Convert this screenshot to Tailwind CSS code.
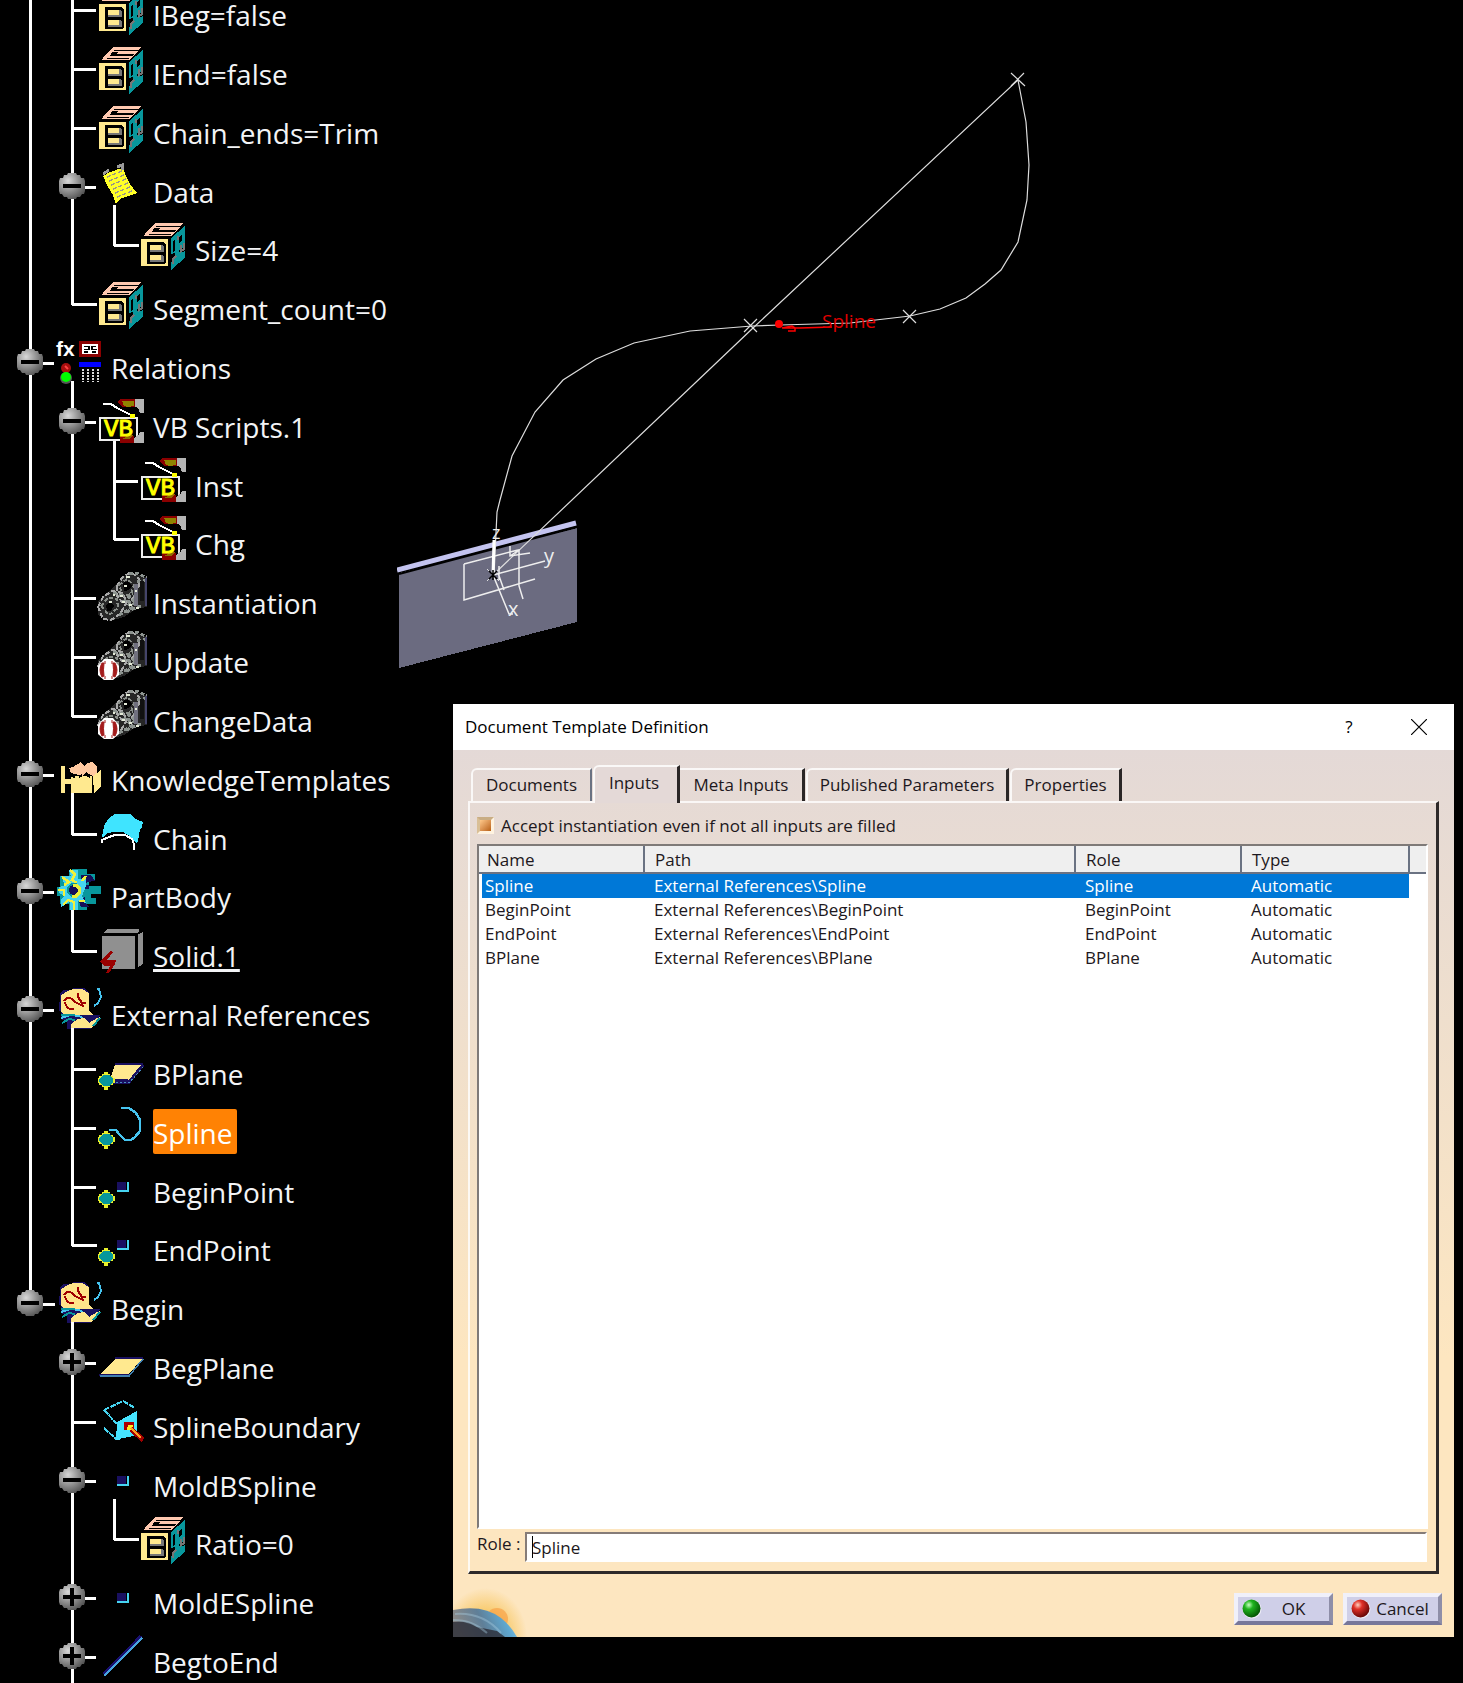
<!DOCTYPE html>
<html lang="en">
<head>
<meta charset="utf-8">
<meta name="viewport" content="width=device-width, initial-scale=1">
<title>Document Template Definition</title>
<script src="https://cdn.jsdelivr.net/npm/@tailwindcss/browser@4"></script>
</head>
<body class="bg-black font-['Open_Sans',sans-serif]">

<svg class="absolute size-0" aria-hidden="true">
  <defs>
    <radialGradient id="steel" cx="0.35" cy="0.3" r="0.75"><stop offset="0" stop-color="#d8d8d8"/><stop offset="0.5" stop-color="#959595"/><stop offset="1" stop-color="#555"/></radialGradient>
    <radialGradient id="green" cx="0.35" cy="0.3" r="0.7"><stop offset="0" stop-color="#c8ffc0"/><stop offset="0.35" stop-color="#1fb41f"/><stop offset="1" stop-color="#045804"/></radialGradient>
    <radialGradient id="red" cx="0.35" cy="0.3" r="0.7"><stop offset="0" stop-color="#ffd0c0"/><stop offset="0.35" stop-color="#e03028"/><stop offset="1" stop-color="#6a0808"/></radialGradient>
    <radialGradient id="glow"><stop offset="0.4" stop-color="#f7c55c"/><stop offset="1" stop-color="#f7c55c" stop-opacity="0"/></radialGradient>
    <linearGradient id="planet" x1="0" y1="0.3" x2="1" y2="0.1"><stop offset="0" stop-color="#8c8a88"/><stop offset="0.4" stop-color="#5f7f98"/><stop offset="0.75" stop-color="#5fa8d0"/><stop offset="1" stop-color="#8fd0f0"/></linearGradient>

  <!-- connectors, one 42px tree column each -->
  <g id="v" fill="#fff"><rect x="19.500" y="0" width="3" height="60" shape-rendering="crispEdges"/></g>
  <g id="t" fill="#fff" shape-rendering="crispEdges"><rect x="19.500" y="0" width="3" height="60"/><rect x="21" y="28" width="24" height="3"/></g>
  <g id="l" fill="#fff" shape-rendering="crispEdges"><rect x="19.500" y="0" width="3" height="30"/><rect x="20.500" y="28" width="25" height="3"/></g>
  <g id="child"><rect x="19.500" y="47" width="3" height="13" fill="#fff" shape-rendering="crispEdges"/></g>
  <g id="minus"><rect x="21" y="28" width="24" height="3" fill="#fff"/><path d="M17 15h8l1 2h3l1 3h3l1 3v10l-1 3h-2l-2 3h-3l-1 2h-8l-1-2h-3l-2-3H9l-1-3V23l1-3h3l1-3h3z" fill="url(#steel)"/><rect x="12" y="26" width="18" height="4"/></g>
  <g id="plus"><rect x="21" y="28" width="24" height="3" fill="#fff"/><path d="M17 15h8l1 2h3l1 3h3l1 3v10l-1 3h-2l-2 3h-3l-1 2h-8l-1-2h-3l-2-3H9l-1-3V23l1-3h3l1-3h3z" fill="url(#steel)"/><path d="M12 26h7v-7h4v7h7v4h-7v7h-4v-7h-7z"/></g>

  <!-- lettered toy block -->
  <g id="box" shape-rendering="crispEdges">
    <path d="M20 7h28l-2 3-9 10H9l3-5z" fill="#ffc9b0"/><path d="M21 10h25M14 18h22" stroke="#000" fill="none"/><path d="M19 12h6l-2 2h18l-2 2H17z"/>
    <path d="M50 10v31l-6 6-8 7V22l7-6z" fill="#08979c"/><path d="M38 25l2-2v11l-2 2zM44 21l3-3v6l-3 3zM36 38l4-1v3l-2 4-2 2zM43 35l7-4v4l-5 2z"/><path d="M43 20v4M46 29v6l3-2v-6M38 48v-5l3-3" stroke="#777" stroke-width="2" fill="none"/>
    <rect x="6" y="23" width="27" height="27" fill="#ffe98f"/><path d="M9 26h19l3 3v7l-1 1 1 1v8l-2 2H9v-2h3V28H9z"/><path d="M9 26h3v22H9z" fill="#ffe98f"/>
    <path d="M15 29h12l2 2v5H15zM15 39h12l2 2v5H15z" fill="#777"/><path d="M15 29h11v5H15zM15 39h11v5H15z" fill="#ffe98f"/>
  </g>
  <g id="sheet" shape-rendering="crispEdges"><path d="M10 18l7-4 6-2 7-3 3 9 4 8 7 9-9 3-8 3-4 5-3-9-5-8z" fill="#ffff28"/><path d="M10 16l6-4M24 9l5-2v5" stroke="#999" stroke-width="3"/><path d="M14 19l15-6M16 23l15-6M18 27l15-6M20 31l15-6M22 35l15-6M24 39l15-6" stroke="#99958a" stroke-width="1.500" stroke-dasharray="4 2"/></g>
  <g id="relations">
    <text x="5" y="22" font-family="Liberation Sans" font-size="21" font-weight="700" fill="#fff">fx</text>
    <g shape-rendering="crispEdges"><path d="M28 7h22v16H28z" fill="#8b0000"/><path d="M31 10h16v10H31z" fill="#fff"/><path d="M33 12.500h5v3h-5M45 12.500h-4v3h5M33 18h4M41 18h4" stroke="#000" stroke-width="1.500" fill="none"/>
    <path d="M28 28h22v5H28z" fill="#00f"/><path d="M32 35v13M37 35v13M42 35v13M47 35v13" stroke="#ddd" stroke-width="2" stroke-dasharray="2 1"/></g>
    <circle cx="15" cy="44" r="6" fill="#555"/><circle cx="15" cy="34" r="5" fill="#a80f0f"/><path d="M14 32l3 3" stroke="#f44" stroke-width="2"/><circle cx="15" cy="43" r="5" fill="#0f0"/>
  </g>
  <g id="vb">
    <g shape-rendering="crispEdges"><path d="M7 25h37v22H7z" fill="#000" stroke="#eee" stroke-width="2"/><path d="M24 9l4-3h14v8H30z" fill="#8b0000"/><path d="M29 8h12v5l-6 1-4-1z" fill="#8f8400"/><path d="M42 6h9v14h-4l-2-5-3-1z" fill="#b5b5b5"/><path d="M10 11h8l6 4 6 3 8 4" stroke="#fff" stroke-width="2" fill="none"/><path d="M27 43h14v7H27z" fill="#8b0000"/><path d="M29 46h8l3-4h-4z" fill="#8f6a00"/><path d="M41 45l3-3h2l1-3h4v11H41z" fill="#b5b5b5"/></g>
    <text x="11" y="43" font-family="Liberation Mono" font-size="24" fill="#ff0" stroke="#ff0">VB</text>
    <path d="M37 21h5v4h-5z" fill="#ff0"/>
  </g>
  <g id="gears" shape-rendering="crispEdges" fill="none">
    <path d="M24 15l7-8 8-3 15 5v29l-11 2-12 8-14 4-12-6V32l10-9z" fill="#262626"/>
    <path d="M24 17l5-8 7-5 7 2 4 6-3 11-6 9-8 2-6-7zM5 38l5-10 9-6 10 2 5 9-7 12-9 6-8-1z" stroke="#aaa" stroke-width="2" stroke-dasharray="5 2"/>
    <path d="M26 16l8-6 7 6-3 9-8 2zM8 37l7-8 9 1 1 9-9 7z" stroke="#8a8f8a" stroke-width="2" stroke-dasharray="4 2"/>
    <path d="M30 14l5-2 4 5-3 4-5 1zM13 36l5-3 3 4-3 5-4 0z" fill="#000"/>
    <path d="M36 4h8l10 5M44 13l8-2M34 32l14 6M26 46l14-8M33 43l12-5M20 24l10 3M30 33l10-8M35 37l8-8" stroke="#8d9490" stroke-width="3" stroke-dasharray="4 2"/>
    <path d="M42 17v20M46 14v24" stroke="#8080909" stroke-width="3"/><path d="M43 15v22" stroke="#70707e" stroke-width="4"/><path d="M53 9v28" stroke="#44446a" stroke-width="2"/><path d="M49 12v20" stroke="#111" stroke-width="4"/>
    <path d="M33 8h4M42 22h2M27 27h3M36 36h3M20 26h2M43 39h3M29 33h3M31 17h3M16 33h3" stroke="#e4ead8" stroke-width="2"/>
  </g>
  <g id="ball"><path d="M11 31h9l6 7v9l-6 5h-9l-6-5v-9z" fill="#fff"/><path d="M9 35q-4 7 0 14l2-1q-1-6 0-13zM22 35q4 7 0 14l-2-1q1-6 0-13z" fill="#a31b1b" stroke="#a31b1b"/><path d="M12 33v18M19 33v18" stroke="#a31b1b" stroke-dasharray="3 12"/></g>
  <g id="castle" shape-rendering="crispEdges"><path d="M10 20h4v13h6v-3h21v17H20v-9h-6v9h-4z" fill="#ffe98f"/><path d="M42 30l8-6v17l-7 6z" fill="#ffe98f"/><path d="M18 22l4-1 5-3 3-2 3 4 4-3 4-1 5 5v5l-4 4-4-2-3-2-4 4-4-1-3-1-4-1z" fill="#ffc9a0"/><path d="M20 30l4 1M28 31l3-2M36 29l3 2" stroke="#000" stroke-width="2"/></g>
  <g id="chainicon" shape-rendering="crispEdges"><path d="M9 32l2-11 4-7 7-5h15l6 5 7 3-1 5-2 2-2 12-2 2-5-6-8-5-8 0-8 1-4 4z" fill="#3fe4ff"/><path d="M9 38v-3l7-3 6-2h10l7 4 2 5v6" fill="none" stroke="#fff" stroke-width="2"/></g>
  <g id="cog" shape-rendering="crispEdges"><path d="M21 6h15v5h8v7h-6v5h12v8H40v4h5v6h-9v6H18v-6h-9v-8H6v-9h3V13h9V9h3z" fill="#08979c"/><path d="M30 12h10l4 6-8 1-4 7M28 38l6-4v5l4 5h-8M30 22h8v4h-8z" fill="#160f5a"/><path d="M18 7h9v9h8v7l-4 10 4 7-8-2v9h-8v-8l-9 5v-8l4-3-6-3v-6l6-2-4-9h10z" fill="#46d4f0"/><path d="M19 7l5 4-3 6 5 3M11 14l7 5-5 3M7 27h6v6M12 42l5-5 6 2v8M28 38h6M31 18l4-5" stroke="#f2f23a" stroke-width="2.500" fill="none"/><circle cx="23" cy="27" r="6" fill="#160f5a" stroke="#08979c" stroke-width="2"/><path d="M22 22h3l3 3v5l-3 3h-4" fill="none" stroke="#e9f03a" stroke-width="3"/></g>
  <g id="solid" shape-rendering="crispEdges" fill="#909090"><path d="M9 14h33v33H9zM14 7h32v2l-2 2H11v-1z"/><path d="M45 12l3-1 2-2v32l-3 3-2 1z"/><path d="M17 29l3 1-6 8h9l-1 4-6 9h-3l4-7h-5l-5-4z" fill="#9a0000"/></g>
  <g id="extref" shape-rendering="crispEdges"><path d="M9 12l4-3h7l3-2h10l5 4v18l3 5 8 0-3 6-6 8H16l0-7-6-3v-8H8z" fill="#191060"/><path d="M10 14l7-4 5-2h9l7 4v18l4 4H14l-4-3z" fill="#ffe58a"/><path d="M27 12v4l4 6h4M13 20q4-6 9-1 4 4 11 6M14 21q1 8 9 7" fill="none" stroke="#a00000" stroke-width="2"/><path d="M10 37l9-3 9 1 8 5" fill="none" stroke="#46c4f0" stroke-width="2"/><path d="M11 42l7-4 6 1M10 34h14" fill="none" stroke="#08979c" stroke-width="2"/><path d="M20 43l7-5 6-1 5 5 8-5 3-1-4 7-5 4H20z" fill="#ffe58a"/><path d="M42 45l7-8" stroke="#08979c" stroke-width="2"/><path d="M46 8h2l2 8-3 6-4 3" fill="none" stroke="#46c4f0" stroke-width="2"/></g>
  <g id="diamond" shape-rendering="crispEdges"><path d="M11 32h4v2h2v2h3v2h2v5h-2v2h-3v2h-2v3h-4v-3H9v-2H6v-2H5v-5h1v-2h3v-2h2z" fill="#e8f02a"/><path d="M10 35h6l4 4v3l-4 4h-6l-4-4v-3z" fill="#08979c"/></g>
  <g id="planeS" shape-rendering="crispEdges"><path d="M22 25h27L36 42H16z" fill="#ffe98f"/><path d="M22 24h28M17 40h18" stroke="#191060" stroke-width="2"/><path d="M50 25L36 42H20" fill="none" stroke="#191060" stroke-width="3"/><path d="M50 27L37 42H22" fill="none" stroke="#4a8fc0" stroke-width="1" stroke-dasharray="2 2"/></g>
  <g id="planeL" shape-rendering="crispEdges"><path d="M22 25h27L36 40H8z" fill="#ffe98f"/><path d="M22 24h28M6 41h30" stroke="#191060" stroke-width="2"/><path d="M50 25L36 42H7" fill="none" stroke="#3f7fb0" stroke-width="1.500"/></g>
  <g id="curve" fill="none" stroke="#46c4f0" stroke-width="2.500" shape-rendering="crispEdges"><path d="M28 9h8l7 5 4 7v11l-5 6-4 3h-6l-6-6-3-4h-7"/></g>
  <g id="point" shape-rendering="crispEdges"><path d="M24 24h9v9h-9z" fill="#191060"/><path d="M24 33h11v-9" fill="none" stroke="#46d4f0" stroke-width="2"/></g>
  <g id="boundary" shape-rendering="crispEdges"><path d="M24 29l20-11v24l-8 2-7 1-3 2h-3z" fill="#46e4ff"/><path d="M11 17l19-9 12 7M11 17l13 14M11 35l12 11" fill="none" stroke="#46d4f0" stroke-width="2" stroke-dasharray="6 1"/><path d="M31 29h10v8H31z" fill="#b00000"/><path d="M35 32h5v5h-6z" fill="#fff020"/><path d="M38 36l12 11" stroke="#a00000" stroke-width="5"/><path d="M38 35l10 10" stroke="#ffa020" stroke-width="2"/></g>
  <g id="segment" shape-rendering="crispEdges"><path d="M11 46L48 8" stroke="#191070" stroke-width="3"/><path d="M11 48L49 10" stroke="#46a4e0" stroke-width="1.500"/></g>
  </defs>
</svg>

<div class="flex h-screen overflow-hidden">
  <nav class="w-[397px] shrink-0 pl-[9px] text-[28px] whitespace-nowrap text-gray-100" aria-label="Specification tree">
    <ul class="-mt-[19px]">
      <li class="flex h-[59px]"><svg class="h-[59px] w-36 shrink-0"><use href="#v"/><use href="#t" x="42"/><use href="#box" x="84"/></svg><span class="mt-2.5 h-[45px] leading-[49px]">IBeg=false</span></li>
      <li class="flex h-[59px]"><svg class="h-[59px] w-36 shrink-0"><use href="#v"/><use href="#t" x="42"/><use href="#box" x="84"/></svg><span class="mt-2.5 h-[45px] leading-[49px]">IEnd=false</span></li>
      <li class="flex h-[59px]"><svg class="h-[59px] w-36 shrink-0"><use href="#v"/><use href="#t" x="42"/><use href="#box" x="84"/></svg><span class="mt-2.5 h-[45px] leading-[49px]">Chain_ends=Trim</span></li>
      <li class="flex h-[58px]"><svg class="h-[59px] w-[42px] shrink-0"><use href="#v"/></svg><button class="h-[59px] w-[42px] shrink-0" aria-label="Collapse Data"><svg class="h-[59px] w-[42px] overflow-visible"><use href="#v"/><use href="#minus"/></svg></button><svg class="h-[59px] w-15 shrink-0"><use href="#child"/><use href="#sheet"/></svg><span class="mt-2.5 h-[45px] leading-[49px]">Data</span></li>
      <li class="flex h-[59px]"><svg class="h-[59px] w-[186px] shrink-0"><use href="#v"/><use href="#v" x="42"/><use href="#l" x="84"/><use href="#box" x="126"/></svg><span class="mt-2.5 h-[45px] leading-[49px]">Size=4</span></li>
      <li class="flex h-[59px]"><svg class="h-[59px] w-36 shrink-0"><use href="#v"/><use href="#l" x="42"/><use href="#box" x="84"/></svg><span class="mt-2.5 h-[45px] leading-[49px]">Segment_count=0</span></li>
      <li class="flex h-[59px]"><button class="h-[59px] w-[42px] shrink-0" aria-label="Collapse Relations"><svg class="h-[59px] w-[42px] overflow-visible"><use href="#v"/><use href="#minus"/></svg></button><svg class="h-[59px] w-15 shrink-0"><use href="#child"/><use href="#relations"/></svg><span class="mt-2.5 h-[45px] leading-[49px]">Relations</span></li>
      <li class="flex h-[59px]"><svg class="h-[59px] w-[42px] shrink-0"><use href="#v"/></svg><button class="h-[59px] w-[42px] shrink-0" aria-label="Collapse VB Scripts.1"><svg class="h-[59px] w-[42px] overflow-visible"><use href="#v"/><use href="#minus"/></svg></button><svg class="h-[59px] w-15 shrink-0"><use href="#child"/><use href="#vb"/></svg><span class="mt-2.5 h-[45px] leading-[49px]">VB Scripts.1</span></li>
      <li class="flex h-[58px]"><svg class="h-[59px] w-[186px] shrink-0"><use href="#v"/><use href="#v" x="42"/><use href="#t" x="84"/><use href="#vb" x="126"/></svg><span class="mt-2.5 h-[45px] leading-[49px]">Inst</span></li>
      <li class="flex h-[59px]"><svg class="h-[59px] w-[186px] shrink-0"><use href="#v"/><use href="#v" x="42"/><use href="#l" x="84"/><use href="#vb" x="126"/></svg><span class="mt-2.5 h-[45px] leading-[49px]">Chg</span></li>
      <li class="flex h-[59px]"><svg class="h-[59px] w-36 shrink-0"><use href="#v"/><use href="#t" x="42"/><use href="#gears" x="84"/></svg><span class="mt-2.5 h-[45px] leading-[49px]">Instantiation</span></li>
      <li class="flex h-[59px]"><svg class="h-[59px] w-36 shrink-0"><use href="#v"/><use href="#t" x="42"/><use href="#gears" x="84"/><use href="#ball" x="84"/></svg><span class="mt-2.5 h-[45px] leading-[49px]">Update</span></li>
      <li class="flex h-[59px]"><svg class="h-[59px] w-36 shrink-0"><use href="#v"/><use href="#l" x="42"/><use href="#gears" x="84"/><use href="#ball" x="84"/></svg><span class="mt-2.5 h-[45px] leading-[49px]">ChangeData</span></li>
      <li class="flex h-[59px]"><button class="h-[59px] w-[42px] shrink-0" aria-label="Collapse KnowledgeTemplates"><svg class="h-[59px] w-[42px] overflow-visible"><use href="#v"/><use href="#minus"/></svg></button><svg class="h-[59px] w-15 shrink-0"><use href="#castle"/><use href="#child"/></svg><span class="mt-2.5 h-[45px] leading-[49px]">KnowledgeTemplates</span></li>
      <li class="flex h-[58px]"><svg class="h-[59px] w-36 shrink-0"><use href="#v"/><use href="#l" x="42"/><use href="#chainicon" x="84"/></svg><span class="mt-2.5 h-[45px] leading-[49px]">Chain</span></li>
      <li class="flex h-[59px]"><button class="h-[59px] w-[42px] shrink-0" aria-label="Collapse PartBody"><svg class="h-[59px] w-[42px] overflow-visible"><use href="#v"/><use href="#minus"/></svg></button><svg class="h-[59px] w-15 shrink-0"><use href="#cog"/><use href="#child"/></svg><span class="mt-2.5 h-[45px] leading-[49px]">PartBody</span></li>
      <li class="flex h-[59px]"><svg class="h-[59px] w-36 shrink-0"><use href="#v"/><use href="#l" x="42"/><use href="#solid" x="84"/></svg><span class="mt-2.5 h-[45px] leading-[49px] underline decoration-[3px] underline-offset-[2px]">Solid.1</span></li>
      <li class="flex h-[59px]"><button class="h-[59px] w-[42px] shrink-0" aria-label="Collapse External References"><svg class="h-[59px] w-[42px] overflow-visible"><use href="#v"/><use href="#minus"/></svg></button><svg class="h-[59px] w-15 shrink-0"><use href="#extref"/><use href="#child"/></svg><span class="mt-2.5 h-[45px] leading-[49px]">External References</span></li>
      <li class="flex h-[59px]"><svg class="h-[59px] w-36 shrink-0"><use href="#v"/><use href="#t" x="42"/><use href="#planeS" x="84"/><use href="#diamond" x="84"/></svg><span class="mt-2.5 h-[45px] leading-[49px]">BPlane</span></li>
      <li class="flex h-[59px]"><svg class="h-[59px] w-36 shrink-0"><use href="#v"/><use href="#t" x="42"/><use href="#curve" x="84"/><use href="#diamond" x="84"/></svg><span class="mt-2.5 h-[45px] rounded-xs bg-[#ff8204] pr-1 leading-[49px] text-white">Spline</span></li>
      <li class="flex h-[58px]"><svg class="h-[59px] w-36 shrink-0"><use href="#v"/><use href="#t" x="42"/><use href="#point" x="84"/><use href="#diamond" x="84"/></svg><span class="mt-2.5 h-[45px] leading-[49px]">BeginPoint</span></li>
      <li class="flex h-[59px]"><svg class="h-[59px] w-36 shrink-0"><use href="#v"/><use href="#l" x="42"/><use href="#point" x="84"/><use href="#diamond" x="84"/></svg><span class="mt-2.5 h-[45px] leading-[49px]">EndPoint</span></li>
      <li class="flex h-[59px]"><button class="h-[59px] w-[42px] shrink-0" aria-label="Collapse Begin"><svg class="h-[59px] w-[42px] overflow-visible"><use href="#l"/><use href="#minus"/></svg></button><svg class="h-[59px] w-15 shrink-0"><use href="#extref"/><use href="#child"/></svg><span class="mt-2.5 h-[45px] leading-[49px]">Begin</span></li>
      <li class="flex h-[59px]"><button class="ml-[42px] h-[59px] w-[42px] shrink-0" aria-label="Expand BegPlane"><svg class="h-[59px] w-[42px] overflow-visible"><use href="#v"/><use href="#plus"/></svg></button><svg class="h-[59px] w-15 shrink-0"><use href="#planeL"/></svg><span class="mt-2.5 h-[45px] leading-[49px]">BegPlane</span></li>
      <li class="flex h-[59px]"><svg class="h-[59px] w-36 shrink-0"><use href="#t" x="42"/><use href="#boundary" x="84"/></svg><span class="mt-2.5 h-[45px] leading-[49px]">SplineBoundary</span></li>
      <li class="flex h-[58px]"><button class="ml-[42px] h-[59px] w-[42px] shrink-0" aria-label="Collapse MoldBSpline"><svg class="h-[59px] w-[42px] overflow-visible"><use href="#v"/><use href="#minus"/></svg></button><svg class="h-[59px] w-15 shrink-0"><use href="#child"/><use href="#point"/></svg><span class="mt-2.5 h-[45px] leading-[49px]">MoldBSpline</span></li>
      <li class="flex h-[59px]"><svg class="h-[59px] w-[186px] shrink-0"><use href="#v" x="42"/><use href="#l" x="84"/><use href="#box" x="126"/></svg><span class="mt-2.5 h-[45px] leading-[49px]">Ratio=0</span></li>
      <li class="flex h-[59px]"><button class="ml-[42px] h-[59px] w-[42px] shrink-0" aria-label="Expand MoldESpline"><svg class="h-[59px] w-[42px] overflow-visible"><use href="#v"/><use href="#plus"/></svg></button><svg class="h-[59px] w-15 shrink-0"><use href="#point"/></svg><span class="mt-2.5 h-[45px] leading-[49px]">MoldESpline</span></li>
      <li class="flex h-[59px]"><button class="ml-[42px] h-[59px] w-[42px] shrink-0" aria-label="Expand BegtoEnd"><svg class="h-[59px] w-[42px] overflow-visible"><use href="#v"/><use href="#plus"/></svg></button><svg class="h-[59px] w-15 shrink-0"><use href="#segment"/></svg><span class="mt-2.5 h-[45px] leading-[49px]">BegtoEnd</span></li>
    </ul>
  </nav>

  <main class="flex min-w-0 flex-1 flex-col">
    <svg class="h-[704px] w-full shrink-0" viewBox="397 0 1066 704" preserveAspectRatio="xMinYMin meet" fill="none" stroke="#ddd" role="img" aria-label="3D view of the spline">
      <path d="M399 573L577 528V622L399 668z" fill="#6b6b80" stroke="none" shape-rendering="crispEdges"/>
      <path d="M397 570L576 523" stroke="#c3c3ef" stroke-width="5"/>
      <path d="M399 574L577 527" stroke="#000" stroke-width="2"/>
      <g stroke-width="1.200">
        <path d="M493 575L753 328L1018 80"/>
        <path d="M1018 80L1026 122L1029 165L1027 200L1018 242L1001 270L985 284L966 298L940 309L910 316L850 323L780 325L752 326L690 331L634 343L596 359L563 380L535 412L512 456L500 500L497 512L494 575"/>
        <path d="M1011 73l14 13M1024 73l-13 13M903 310l13 13M916 310l-13 13M744 319l13 13M757 319l-13 13"/>
      </g>
      <path d="M464 564V600L535 579M464 564L518 550M519 549V586L523 599M510 546V556L530 553M510 556L519 550M493 575L545 561M493 575L509 614L513 614M498 573L504 590M499 566V580" stroke="#eee" stroke-width="1.500"/>
      <path d="M494 540L493 575" stroke="#fff" stroke-width="3"/>
      <path d="M487 569l12 12M499 569l-12 12"/><path d="M489 571l8 8M497 571l-8 8M493 570v10" stroke="#000" stroke-width="1.500"/>
      <g fill="#eee" stroke="none" font-family="Open Sans" font-size="20"><text x="544" y="563">y</text><text x="508" y="616">x</text><text x="492" y="539" font-size="18">z</text></g>
      <g stroke="#f00" stroke-width="1.500"><circle cx="779" cy="324" r="4" fill="#f00" stroke="none"/><path d="M782 328l10-2 3 2v3h-7M783 328h17l32-1"/></g>
      <text x="822" y="328" fill="#e00000" stroke="none" font-family="Open Sans" font-size="19">Spline</text>
    </svg>

    <section class="mr-[9px] mb-[46px] ml-14 flex min-h-0 flex-1 flex-col bg-linear-to-b from-[#e2d8d8] to-[#fde6c0] to-70% text-[17px] text-[#1d1820]" role="dialog" aria-labelledby="dlg-title">
      <header class="flex h-[46px] shrink-0 items-center bg-white pl-3 text-black">
        <h1 id="dlg-title" class="flex-1">Document Template Definition</h1>
        <button class="flex h-full w-[70px] items-center justify-center" aria-label="Help">?</button>
        <button class="flex h-full w-[70px] items-center justify-center" aria-label="Close"><svg class="size-4" viewBox="0 0 16 16"><path d="M0 0l16 16M16 0L0 16" stroke="#000" stroke-width="1.200"/></svg></button>
      </header>

      <div class="flex min-h-0 flex-1 flex-col px-[15px] pt-[15px]">
        <div class="flex h-9 shrink-0 items-end pl-[3px] leading-[30px]" role="tablist">
          <button role="tab" class="h-[33px] w-[121px] rounded-tl-md border-t-2 border-r-2 border-l-2 border-t-white/80 border-r-gray-500 border-l-white/80 pb-1">Documents</button>
          <button role="tab" aria-selected="true" class="z-10 ml-px -mb-0.5 h-[38px] w-[87px] rounded-tl-md border-t-2 border-r-3 border-l-2 border-t-white/80 border-r-[#2a2626] border-l-white/80 bg-[#e4d9d7] pr-1 pb-1">Inputs</button>
          <button role="tab" class="h-[33px] w-[125px] border-t-2 border-r-3 border-t-white/80 border-r-[#2a2626] pb-1">Meta Inputs</button>
          <button role="tab" class="ml-px h-[33px] w-[203px] rounded-tl-md border-t-2 border-r-3 border-l-2 border-t-white/80 border-r-[#2a2626] border-l-white/80 pb-1">Published Parameters</button>
          <button role="tab" class="ml-px h-[33px] w-[112px] rounded-tl-md border-t-2 border-r-3 border-l-2 border-t-white/80 border-r-[#2a2626] border-l-white/80 pb-1">Properties</button>
        </div>

        <div class="flex min-h-0 flex-1 flex-col border-t-2 border-r-3 border-b-3 border-l-2 border-t-white/80 border-r-[#2e2a2a] border-b-[#2e2a2a] border-l-white/80 pr-2 pl-[7px]" role="tabpanel">
          <label class="flex h-[41px] shrink-0 items-center gap-[7px] pt-1">
            <input type="checkbox" class="size-[17px] appearance-none border-3 border-t-[#c9ad84] border-r-[#fff3e0] border-b-[#fff3e0] border-l-[#d9bf96] bg-linear-to-br from-[#ffc98a] to-[#b8600c]" checked>
            Accept instantiation even if not all inputs are filled
          </label>
          <div class="min-h-0 flex-1 overflow-hidden border-2 border-t-[#7f7a78] border-r-white border-b-white border-l-[#7f7a78] bg-white">
            <table class="w-full table-fixed border-collapse text-left">
              <colgroup><col class="w-[3px]"><col class="w-[162px]"><col class="w-[431px]"><col class="w-[166px]"><col class="w-[168px]"><col></colgroup>
              <thead>
                <tr class="h-[27px] border-b-2 border-gray-500 bg-[#efefef] leading-[25px]">
                  <th class="p-0" aria-hidden="true"></th>
                  <th class="border-r-2 border-gray-500 p-0 pl-[5px] font-normal">Name</th>
                  <th class="border-r-2 border-gray-500 p-0 pl-2.5 font-normal">Path</th>
                  <th class="border-r-2 border-gray-500 p-0 pl-2.5 font-normal">Role</th>
                  <th class="border-r-2 border-gray-500 p-0 pl-2.5 font-normal">Type</th>
                  <th class="p-0" aria-hidden="true"></th>
                </tr>
              </thead>
              <tbody class="leading-6">
                <tr class="text-white"><td class="p-0"></td><td class="bg-[#0078d7] p-0 pl-[3px]">Spline</td><td class="bg-[#0078d7] p-0 pl-2.5">External References\Spline</td><td class="bg-[#0078d7] p-0 pl-2.5">Spline</td><td class="bg-[#0078d7] p-0 pl-2.5">Automatic</td><td class="p-0"></td></tr>
                <tr><td class="p-0"></td><td class="p-0 pl-[3px]">BeginPoint</td><td class="p-0 pl-2.5">External References\BeginPoint</td><td class="p-0 pl-2.5">BeginPoint</td><td class="p-0 pl-2.5">Automatic</td><td class="p-0"></td></tr>
                <tr><td class="p-0"></td><td class="p-0 pl-[3px]">EndPoint</td><td class="p-0 pl-2.5">External References\EndPoint</td><td class="p-0 pl-2.5">EndPoint</td><td class="p-0 pl-2.5">Automatic</td><td class="p-0"></td></tr>
                <tr><td class="p-0"></td><td class="p-0 pl-[3px]">BPlane</td><td class="p-0 pl-2.5">External References\BPlane</td><td class="p-0 pl-2.5">BPlane</td><td class="p-0 pl-2.5">Automatic</td><td class="p-0"></td></tr>
              </tbody>
            </table>
          </div>
          <div class="flex h-[42px] shrink-0 pt-[3px]">
            <label for="role" class="w-12 leading-6 whitespace-nowrap">Role :</label>
            <div class="relative mr-px flex-1">
              <input id="role" type="text" value="Spline" class="h-[30px] w-full border-2 border-t-[#857c78] border-r-white border-b-white border-l-[#857c78] bg-white pl-[5px] outline-none">
              <span class="absolute top-1 left-[7px] h-[22px] w-px bg-black" aria-hidden="true"></span>
            </div>
          </div>
        </div>
      </div>

      <footer class="flex h-[63px] shrink-0 items-start">
        <svg class="h-[63px] w-[90px] shrink-0" viewBox="0 0 90 63"><ellipse cx="32" cy="62" rx="42" ry="48" fill="url(#glow)"/><circle cx="44" cy="45" r="11" fill="#f79a3c" opacity="0.600"/><path d="M0 36q30-6 48 8 10 8 16 19H0z" fill="url(#planet)"/><path d="M0 48q14-2 24 5l20 4 8 6H0z" fill="#2a2c36" opacity="0.800"/><path d="M2 40q28-2 46 19M0 46q20 0 34 13" stroke="#a8cce0" stroke-width="2" opacity="0.400" fill="none"/></svg>
        <div class="flex flex-1 justify-end gap-2.5 pt-[19px] pr-3">
          <button class="flex h-8 w-[99px] items-center border-4 border-t-[#f0f0fa] border-r-[#8e8ea8] border-b-[#77779a] border-l-[#f0f0fa] bg-[#cfcfe8] pl-1"><svg class="size-5 shrink-0" viewBox="0 0 20 20"><circle cx="10" cy="10" r="9.500" fill="#fff" opacity="0.600"/><circle cx="9.500" cy="9.500" r="9" fill="url(#green)"/></svg><span class="flex-1 pr-1 text-center">OK</span></button>
          <button class="flex h-8 w-[99px] items-center border-4 border-t-[#f0f0fa] border-r-[#8e8ea8] border-b-[#77779a] border-l-[#f0f0fa] bg-[#cfcfe8] pl-1"><svg class="size-5 shrink-0" viewBox="0 0 20 20"><circle cx="10" cy="10" r="9.500" fill="#fff" opacity="0.600"/><circle cx="9.500" cy="9.500" r="9" fill="url(#red)"/></svg><span class="flex-1 pr-1 text-center">Cancel</span></button>
        </div>
      </footer>
    </section>
  </main>
</div>
</body>
</html>
